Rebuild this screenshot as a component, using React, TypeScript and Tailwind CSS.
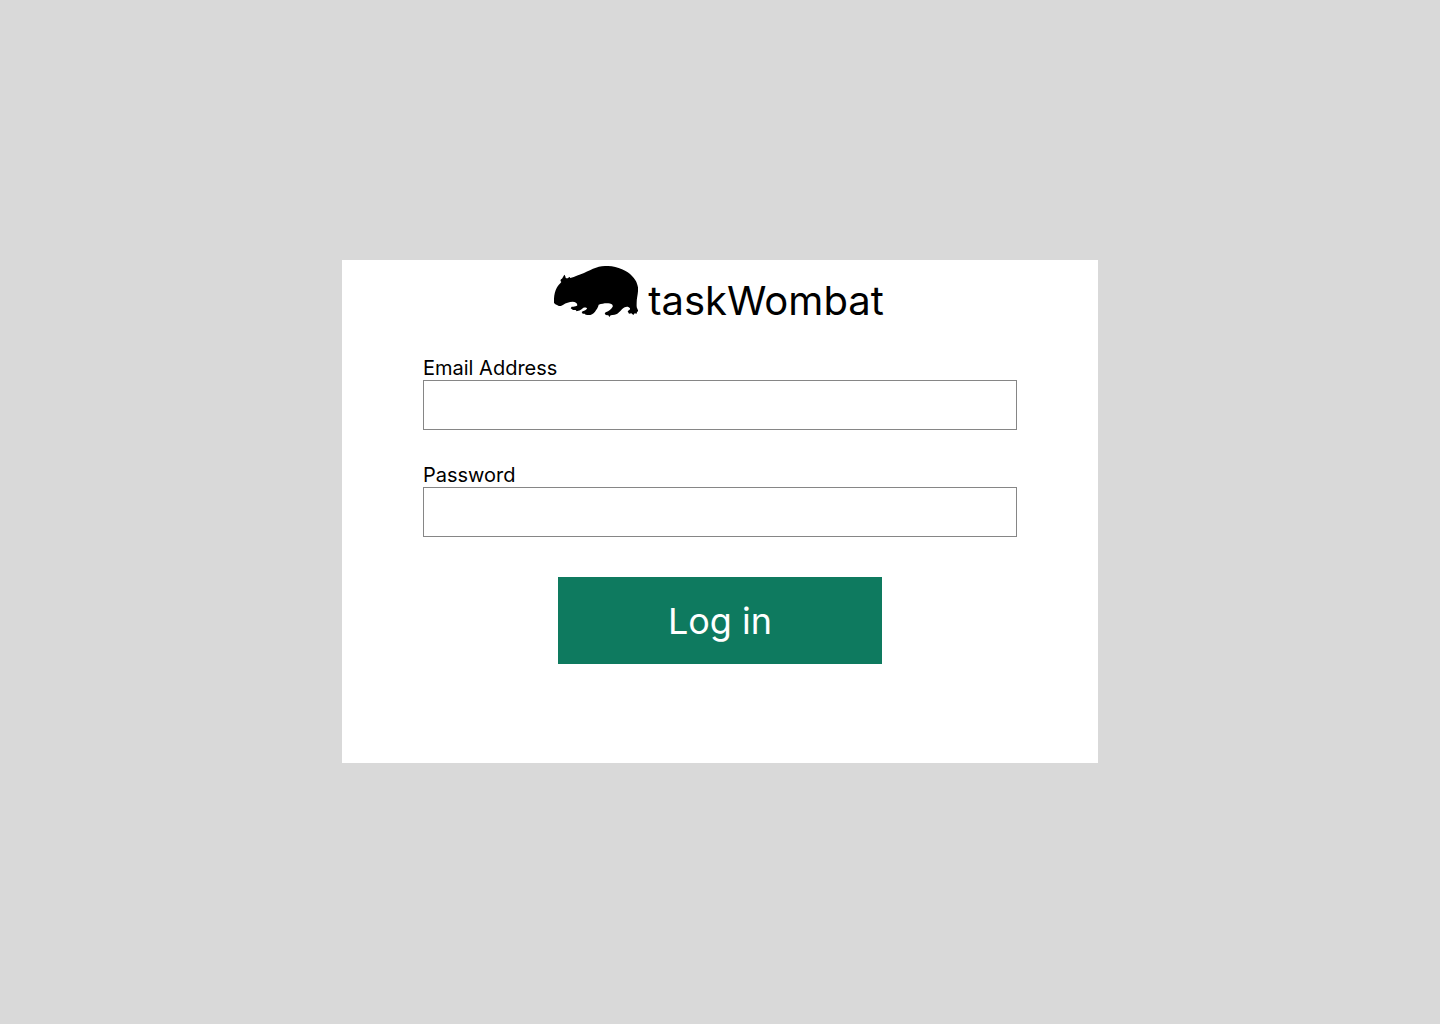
import React from "react";

function WombatLogo() {
  return (
    <svg viewBox="18 24 252 153" className="h-[51px] w-[84px] shrink-0" fill="black" aria-hidden="true">
      <path d="M18 134 C17 118 20 101 26 90 C30 83 35 78 40 72 C36 69 37 64 42 62 C44 58 47 54 49 50 C52 53 53 57 53 60 C56 61 58 61 61 60 C62 57 65 56 67 60 C80 56 96 50 108 45 C120 39 132 33 144 29 C155 25 168 24 180 24 C195 24 209 28 222 34 C235 40 245 46 252 54 C260 62 265 70 267 77 C270 85 271 92 270 100 C269 112 266 122 266 134 C266 142 265 147 268 152 L271 159 L267 162 L266 167 L260 166 L256 171 L250 166 L243 167 L239 160 C243 155 247 156 246 151 C243 146 236 145 230 148 C223 151 219 158 213 163 C208 169 202 171 194 171 L188 172 L184 177 L181 172 L173 171 L170 165 L175 162 C182 159 190 153 194 146 C196 139 188 137 181 136 C172 135 162 137 152 140 C150 148 146 154 141 161 C135 168 128 172 119 171 L113 170 L110 167 L104 167 L101 162 C105 158 112 159 117 152 C116 148 110 148 105 150 C101 154 96 158 91 158 L86 160 L83 156 L75 156 L68 151 L71 146 C78 147 84 146 88 142 C88 135 82 131 74 131 C64 131 53 135 46 140 C41 143 35 145 31 143 C26 140 20 138 18 134 Z" />
    </svg>
  );
}

type FieldProps = { id: string; label: string; type: string; autoComplete: string };

function Field({ id, label, type, autoComplete }: FieldProps) {
  return (
    <div className="flex w-full flex-col">
      <label htmlFor={id} className="text-[20px] leading-6">
        {label}
      </label>
      <input
        id={id}
        name={id}
        type={type}
        autoComplete={autoComplete}
        className="h-[50px] w-full border border-[#868686] bg-white px-3 text-[20px] outline-none focus:border-[#0e7a5f]"
      />
    </div>
  );
}

export default function App() {
  return (
    <main className="flex min-h-screen items-center justify-center bg-[#d9d9d9] pb-px font-['Inter',sans-serif] text-black">
      <form
        onSubmit={(event) => event.preventDefault()}
        className="flex w-full max-w-[756px] flex-col items-center bg-white px-[81px] pt-1.5 pb-[99px]"
      >
        <header className="mb-[31px] flex gap-2.5 pr-0.5">
          <WombatLogo />
          <h1 className="pt-[11px] text-[40px] leading-12">taskWombat</h1>
        </header>
        <div className="flex w-full flex-col gap-[33px]">
          <Field id="email" label="Email Address" type="email" autoComplete="email" />
          <Field id="password" label="Password" type="password" autoComplete="current-password" />
        </div>
        <button
          type="submit"
          className="mt-10 h-[87px] w-full max-w-[324px] cursor-pointer bg-[#0e7a5f] text-[36px] leading-11 text-white"
        >
          Log in
        </button>
      </form>
    </main>
  );
}
